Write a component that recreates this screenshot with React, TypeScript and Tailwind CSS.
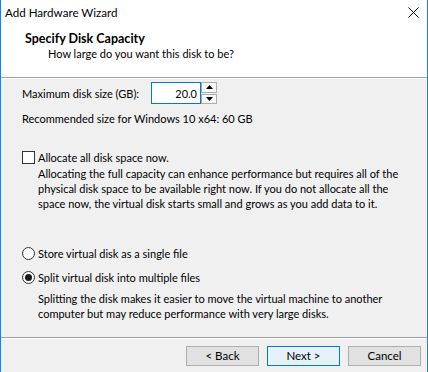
import React from "react";

const font = { fontFamily: 'Lato, "Liberation Sans", Arial, sans-serif' };

function Checkbox() {
  return <div className="h-[13px] w-[13px] shrink-0 border border-[#333333] bg-white" />;
}

function Radio({ checked }: { checked?: boolean }) {
  return (
    <div className="flex h-[13px] w-[13px] shrink-0 items-center justify-center rounded-full border border-[#333333] bg-white">
      {checked && <div className="h-[7px] w-[7px] rounded-full bg-[#1b1b1b]" />}
    </div>
  );
}

function Spinner() {
  return (
    <div className="flex h-[22px] w-[16px] flex-col gap-px">
      <div className="flex flex-1 items-center justify-center border border-[#adadad] bg-[#f7f7f7]">
        <svg width="7" height="4" viewBox="0 0 7 4">
          <path d="M3.5 0 L7 4 L0 4 Z" fill="#000" />
        </svg>
      </div>
      <div className="flex flex-1 items-center justify-center border border-[#adadad] bg-[#f7f7f7]">
        <svg width="7" height="4" viewBox="0 0 7 4">
          <path d="M0 0 L7 0 L3.5 4 Z" fill="#000" />
        </svg>
      </div>
    </div>
  );
}

function Button({ label, primary }: { label: string; primary?: boolean }) {
  return (
    <button
      className={
        "flex h-[20px] w-[73px] items-center justify-center border text-[11.5px] leading-none text-black " +
        (primary ? "border-[#0078d7] bg-[#e5f1fb]" : "border-[#adadad] bg-[#e1e1e1]")
      }
    >
      {label}
    </button>
  );
}

export default function App() {
  return (
    <div
      className="flex h-[372px] w-[428px] flex-col overflow-hidden border-x border-[#1883d7] bg-[#f0f0f0] text-[11px] leading-[15px] text-black"
      style={font}
    >
      {/* title bar */}
      <div className="flex h-[30px] shrink-0 items-start justify-between bg-white pl-[4px] pr-[8px] pt-[5px] text-[11.6px]">
        <span>Add Hardware Wizard</span>
        <svg width="11" height="11" viewBox="0 0 11 11" className="mt-[2px]">
          <path d="M0.5 0.5 L10.5 10.5 M10.5 0.5 L0.5 10.5" stroke="#000" strokeWidth="1" />
        </svg>
      </div>

      {/* header */}
      <div className="flex h-[47px] shrink-0 flex-col bg-white pl-[24px] pt-[1px]">
        <span className="text-[12.5px] font-bold">Specify Disk Capacity</span>
        <span className="pl-[23px]">How large do you want this disk to be?</span>
      </div>
      <div className="h-px shrink-0 bg-[#a0a0a0]" />
      <div className="h-px shrink-0 bg-white" />

      {/* body */}
      <div className="flex h-[258px] shrink-0 flex-col pl-[21px]">
        <div className="mt-[3px] flex h-[22px] items-center">
          <span className="w-[129px] whitespace-nowrap">Maximum disk size (GB):</span>
          <div className="flex h-[22px] w-[50px] items-center justify-end border border-[#0078d7] bg-white pr-[3px]">
            20.0
          </div>
          <Spinner />
        </div>
        <div className="mt-[7px] whitespace-nowrap">Recommended size for Windows 10 x64: 60 GB</div>

        <div className="mt-[24px] flex items-center gap-[3px]">
          <Checkbox />
          <span>Allocate all disk space now.</span>
        </div>
        <div className="mt-px flex flex-col whitespace-nowrap pl-[16px]">
          <span>Allocating the full capacity can enhance performance but requires all of the</span>
          <span>physical disk space to be available right now. If you do not allocate all the</span>
          <span>space now, the virtual disk starts small and grows as you add data to it.</span>
        </div>

        <div className="mt-[35px] flex items-center gap-[3px]">
          <Radio />
          <span>Store virtual disk as a single file</span>
        </div>
        <div className="mt-[9px] flex items-center gap-[3px]">
          <Radio checked />
          <span>Split virtual disk into multiple files</span>
        </div>
        <div className="mt-[6px] flex flex-col whitespace-nowrap pl-[16px]">
          <span>Splitting the disk makes it easier to move the virtual machine to another</span>
          <span>computer but may reduce performance with very large disks.</span>
        </div>
      </div>

      <div className="h-px shrink-0 bg-[#a0a0a0]" />
      <div className="h-px shrink-0 bg-white" />

      {/* footer */}
      <div className="flex h-[33px] shrink-0 items-start justify-end gap-[8px] pr-[6px] pt-[7px]">
        <Button label="< Back" />
        <Button label="Next >" primary />
        <Button label="Cancel" />
      </div>
    </div>
  );
}
